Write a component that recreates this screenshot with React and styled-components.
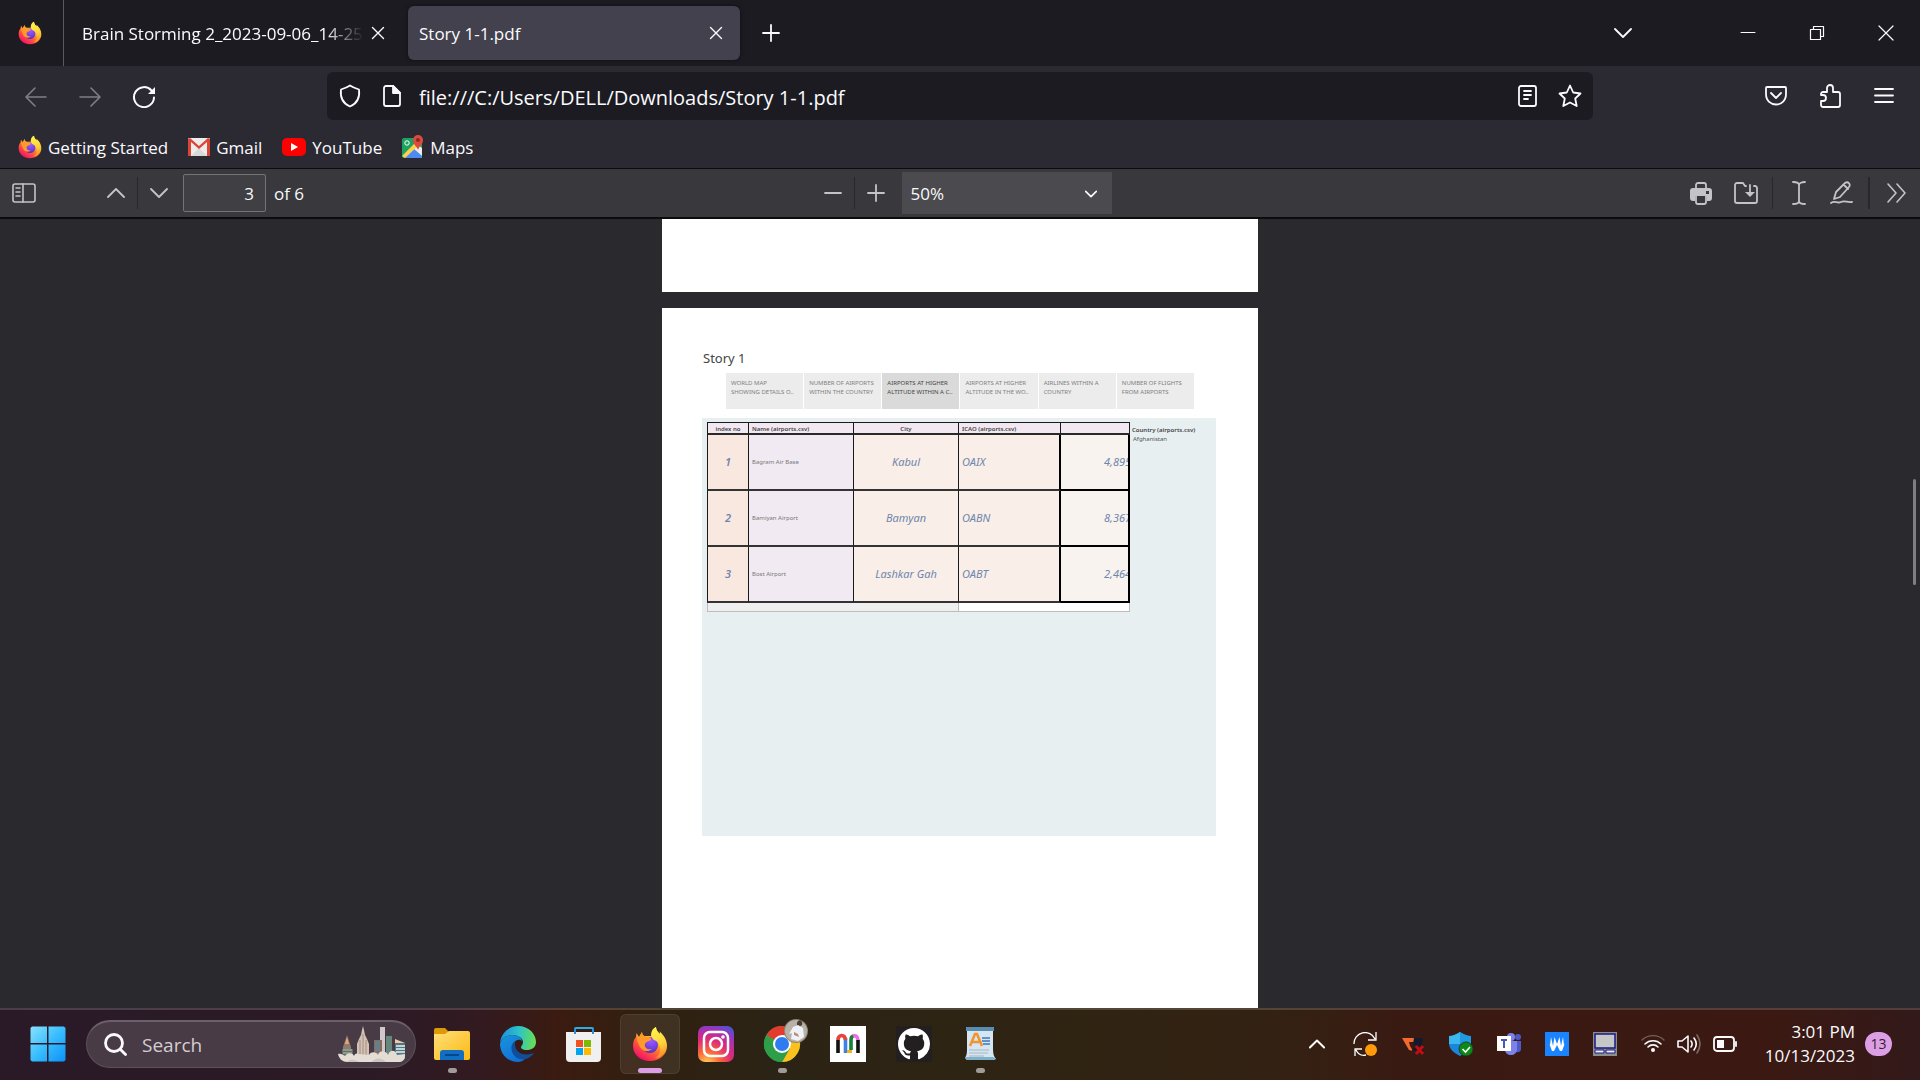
import React from "react";
import styled, { createGlobalStyle, css } from "styled-components";

const Global = createGlobalStyle`
  *, *::before, *::after { box-sizing: border-box; }
  body { margin: 0; background: #2a2a2e; font-family: "Open Sans", "Noto Sans", sans-serif; }
  button, input, select { font-family: inherit; color: inherit; border: 0; padding: 0; margin: 0; outline: 0; }
  button { background: none; }
  svg { display: block; flex: none; }
`;

/* ---------- shell ---------- */
const Screen = styled.div`
  height: 100vh;
  display: flex;
  flex-direction: column;
  overflow: hidden;
  color: #fbfbfe;
  font-size: 17px;
`;
const IconButton = styled.button`
  flex: none;
  display: flex;
  align-items: center;
  justify-content: center;
  width: ${(p) => p.$w || 36}px;
  height: 36px;
  opacity: ${(p) => (p.$dim ? 0.4 : 1)};
`;
const Spacer = styled.div`
  flex: 1;
`;

/* ---------- tab strip ---------- */
const TabStrip = styled.header`
  flex: none;
  display: flex;
  align-items: center;
  height: 66px;
  background: #1c1b22;
`;
const ViewButton = styled.button`
  flex: none;
  display: flex;
  align-items: center;
  padding-left: 18px;
  width: 64px;
  height: 66px;
  border-right: 1px solid #5a5960;
`;
const Tab = styled.div`
  flex: 0 0 332px;
  min-width: 0;
  display: flex;
  align-items: center;
  height: 54px;
  border-radius: 6px;
  ${(p) =>
    p.$active
      ? css`margin-left: 12px; padding: 0 6px 0 11px; background: #42414d; box-shadow: 0 0 4px rgba(0, 0, 0, 0.5);`
      : css`padding: 0 4px 0 18px;`}
`;
const TabTitle = styled.span`
  flex: 1;
  min-width: 0;
  white-space: nowrap;
  overflow: hidden;
  ${(p) => p.$fade && css`mask-image: linear-gradient(to left, transparent, #000 40px);`}
`;
const WindowButtons = styled.div`
  display: flex;
`;

/* ---------- navigation ---------- */
const NavBar = styled.nav`
  flex: none;
  display: flex;
  align-items: center;
  height: 60px;
  padding: 0 18px;
  background: #2b2a33;
`;
const NavGroup = styled.div`
  display: flex;
  gap: 18px;
`;
const UrlBar = styled.label`
  flex: 1;
  display: flex;
  align-items: center;
  gap: 6px;
  height: 48px;
  margin: 0 165px;
  padding: 0 5px;
  border-radius: 6px;
  background: #1c1b22;
`;
const UrlInput = styled.input`
  flex: 1;
  min-width: 0;
  padding: 2px 0 0 3px;
  background: none;
  font-size: 20px;
`;
const Bookmarks = styled.div`
  flex: none;
  display: flex;
  align-items: center;
  gap: 20px;
  height: 43px;
  padding-left: 18px;
  background: #2b2a33;
  border-bottom: 1px solid #0c0c0d;
`;
const Bookmark = styled.a`
  display: flex;
  align-items: center;
  gap: 6px;
  height: 42px;
  color: inherit;
  text-decoration: none;
`;

/* ---------- pdf toolbar ---------- */
const PdfBar = styled.div`
  flex: none;
  display: grid;
  grid-template-columns: 1fr auto 1fr;
  align-items: center;
  height: 50px;
  background: #38383d;
  border-bottom: 2px solid #0c0c0d;
  color: #c4c4c7;
`;
const PdfGroup = styled.div`
  display: flex;
  align-items: center;
  justify-content: ${(p) => (p.$end ? "flex-end" : "flex-start")};
  padding-left: ${(p) => (p.$end ? 0 : 6)}px;
`;
const PageNav = styled.div`
  display: flex;
  align-items: center;
  margin-left: 56px;
`;
const Divider = styled.span`
  flex: none;
  width: ${(p) => p.$w || 1}px;
  height: 32px;
  margin: 0 ${(p) => p.$gap || 3}px;
  background: #28282c;
`;
const PageField = styled.label`
  display: flex;
  align-items: center;
  gap: 8px;
  margin-left: 6px;
  color: #f9f9fa;
`;
const PageInput = styled.input`
  width: 83px;
  height: 38px;
  padding-right: 11px;
  text-align: right;
  font-size: 17px;
  background: #404044;
  border: 1px solid #737378;
  border-radius: 2px;
`;
const ZoomBox = styled.label`
  position: relative;
  margin-left: 8px;
  color: #f9f9fa;
  svg { position: absolute; right: 15px; top: 16px; pointer-events: none; }
`;
const ZoomSelect = styled.select`
  appearance: none;
  display: block;
  width: 210px;
  height: 42px;
  padding-left: 9px;
  font-size: 17px;
  background: #4a4a4f;
`;

/* ---------- document ---------- */
const Viewer = styled.main`
  flex: 1;
  min-height: 0;
  display: flex;
  background: #2a2a2e;
  overflow: hidden;
`;
const Pages = styled.div`
  flex: 1;
  display: flex;
  flex-direction: column;
  align-items: center;
  gap: 16px;
  padding-left: 7px;
`;
const Sheet = styled.section`
  width: 596px;
  background: #fff;
  color: #555;
  ${(p) => (p.$tail ? css`flex: 0 0 73px;` : css`flex: 1; padding: 40px 42px 0 40px;`)}
`;
const ScrollTrack = styled.div`
  flex: none;
  width: 7px;
  padding-top: 260px;
`;
const ScrollThumb = styled.div`
  width: 3px;
  height: 106px;
  border-radius: 2px;
  background: #7f7f81;
`;
const StoryTitle = styled.h1`
  margin: 0 0 5px;
  padding-left: 1px;
  font: 400 13px/20px "Noto Sans", sans-serif;
  color: #444;
`;
const StoryTabs = styled.div`
  display: grid;
  grid-template-columns: repeat(6, 1fr);
  gap: 1px;
  margin: 0 22px 9px 24px;
`;
const StoryTab = styled.button`
  height: 36px;
  padding: 6px 0 0 5px;
  display: flex;
  flex-direction: column;
  white-space: nowrap;
  text-align: left;
  font: 6px/9px "Noto Sans", sans-serif;
  color: ${(p) => (p.$on ? "#444" : "#808080")};
  background: ${(p) => (p.$on ? "#dadada" : "#ececec")};
`;
const Dashboard = styled.div`
  display: flex;
  align-items: flex-start;
  gap: 2px;
  height: 418px;
  padding: 4px 0 0 5px;
  background: #e7eff1;
`;
const Grid = styled.table`
  flex: none;
  width: 423px;
  table-layout: fixed;
  border-collapse: separate;
  border-spacing: 0;
  font-family: "Noto Sans", sans-serif;
  border-top: 1px solid #1a1a1a;
  th:first-child, tbody td:first-child { border-left: 1px solid #1a1a1a; }
  tfoot td:first-child { border-left: 1px solid #bdbdbd; }
`;
const Col = styled.col`
  width: ${(p) => p.$w}px;
`;
const Th = styled.th`
  height: 12px;
  padding: 1px 3px 0;
  font-size: 6px;
  line-height: 8px;
  font-weight: 600;
  text-align: ${(p) => p.$align || "left"};
  color: #444;
  background: #f1e8f1;
  border-right: 1px solid #1a1a1a;
  border-bottom: 2px solid #2a2a2a;
`;
const Td = styled.td`
  height: 56px;
  padding: 0 3px;
  overflow: hidden;
  white-space: nowrap;
  font-size: 11px;
  line-height: 14px;
  font-style: italic;
  color: #6f86ad;
  background: #f9eee8;
  border-right: 1px solid #1a1a1a;
  border-bottom: 2px solid #333;
  ${(p) => p.$kind === "index" && css`background: #f9e8df; text-align: center; font-weight: 600;`}
  ${(p) => p.$kind === "name" && css`background: #f1eaf2; font-style: normal; font-size: 6px; color: #777;`}
  ${(p) => p.$kind === "city" && css`text-align: center;`}
  ${(p) => p.$kind === "icao" && css`border-right: 2px solid #000;`}
  ${(p) => p.$kind === "alt" && css`
    padding: 0 0 0 43px; background: #f8f3ef; text-overflow: clip;
    border-right: 2px solid #000; border-bottom: 2px solid #000;`}
`;
const Foot = styled.td`
  height: 9px;
  padding: 0;
  background: ${(p) => (p.$plain ? "#fff" : "#efefef")};
  border-right: 1px solid #bdbdbd;
  border-bottom: 1px solid #bdbdbd;
`;
const Filter = styled.div`
  padding-top: 4px;
  font: 6px/9px "Noto Sans", sans-serif;
  color: #555;
  strong { display: block; font-weight: 600; color: #444; }
  span { padding-left: 1px; }
`;

/* ---------- taskbar ---------- */
const Taskbar = styled.footer`
  flex: none;
  display: flex;
  align-items: center;
  height: 72px;
  padding: 0 28px 2px 18px;
  border-top: 2px solid rgba(255, 255, 255, 0.16);
  background: linear-gradient(90deg, #2a1a27 0, #2b1a26 19%, #321a20 25%, #3b1b11 29%, #30200f 34%, #2b2315 40%, #2f2413 54%, #332213 66%, #391a12 73%, #3b1912 92%, #33191a 100%) border-box;
`;
const Apps = styled.div`
  display: flex;
  align-items: center;
  gap: 6px;
`;
const AppButton = styled.button`
  position: relative;
  display: flex;
  align-items: center;
  justify-content: center;
  width: 60px;
  height: 60px;
  border-radius: 6px;
  ${(p) =>
    p.$active && css`background: rgba(255, 255, 255, 0.08); box-shadow: inset 0 0 0 1px rgba(255, 255, 255, 0.07);`}
  &::after {
    content: "";
    position: absolute;
    bottom: 1px;
    height: 5px;
    border-radius: 3px;
    width: ${(p) => (p.$active ? 24 : p.$open ? 9 : 0)}px;
    background: ${(p) => (p.$active ? "#dc9fe5" : "#a09b98")};
  }
`;
const Search = styled.label`
  display: flex;
  align-items: center;
  gap: 15px;
  width: 330px;
  height: 48px;
  margin-left: 2px;
  padding: 0 7px 0 17px;
  border-radius: 24px;
  background: #493b45;
  border: 1px solid #5d5059;
  border-top: 2px solid #6b5f69;
`;
const SearchInput = styled.input`
  flex: 1;
  min-width: 0;
  background: none;
  font-size: 19px;
  &::placeholder { color: #d3ced1; opacity: 1; }
`;
const Tray = styled.div`
  display: flex;
  margin-right: 6px;
`;
const Clock = styled.button`
  width: 106px;
  text-align: right;
  white-space: nowrap;
  font-size: 17px;
  line-height: 24px;
`;
const Count = styled.button`
  width: 27px;
  height: 24px;
  margin-left: 10px;
  border-radius: 12px;
  background: #dc9fe5;
  color: #33202f;
  font-size: 14px;
  line-height: 24px;
`;

/* ---------- line icons ---------- */
const Line = ({ s = 24, h, w = 1.6, vb, children }) => (
  <svg width={s} height={h || s} viewBox={vb || `0 0 ${s} ${h || s}`} fill="none" stroke="currentColor" strokeWidth={w} strokeLinecap="round" strokeLinejoin="round">
    {children}
  </svg>
);
const Cross = () => <Line s={14} w={1.4}><path d="M1.5 1.5l11 11M12.5 1.5l-11 11" /></Line>;
const Chevron = ({ up, s = 18, w = 1.8 }) => (
  <Line s={s} vb="0 0 18 18" w={w}><path d={up ? "M1 13l8-8 8 8" : "M1 5l8 8 8-8"} /></Line>
);

/* ---------- colour icons ---------- */
const Firefox = ({ s = 24 }) => (
  <svg width={s} height={s} viewBox="0 0 36 36">
    <defs>
      <linearGradient id="ffBody" x1="0.85" y1="0.1" x2="0.25" y2="0.95">
        <stop offset="0" stopColor="#fff44f" /><stop offset=".35" stopColor="#ffb52b" />
        <stop offset=".6" stopColor="#ff6a2f" /><stop offset="1" stopColor="#f6106a" />
      </linearGradient>
      <radialGradient id="ffGlobe" cx=".55" cy=".2" r=".9">
        <stop offset="0" stopColor="#a05bff" /><stop offset=".6" stopColor="#6f3fe0" /><stop offset="1" stopColor="#4a2aa8" />
      </radialGradient>
      <linearGradient id="ffTail" x1=".4" y1="0" x2=".6" y2="1">
        <stop offset="0" stopColor="#fff44f" /><stop offset=".55" stopColor="#ffd43a" /><stop offset="1" stopColor="#ff8a2a" />
      </linearGradient>
    </defs>
    <path fill="url(#ffBody)" d="M5 7c0 2 1 3 2 4l3-5c0 2 1 4 3 4h6c0-5 2-8 5-9 0 3 2 5 4 7 0-1 0-2-1-3 5 4 8 9 8 15 0 9-8 15-17 15S1 29 1 20c0-4 1-7 3-9 0-2 0-3 1-4z" />
    <circle cx="18" cy="19" r="8" fill="url(#ffGlobe)" />
    <path fill="#ff9a2b" d="M5 8l2 3 3-5c0 3 2 4 4 5 3 0 5 0 5 2s-5 2-6 5c-1 4 3 6 7 5-4 4-11 2-13-4-2-4-3-7-2-11z" />
    <path fill="url(#ffTail)" d="M24 1c0 4 3 6 6 9 5 6 5 14 1 18-2 3-5 4-8 4 4-2 6-6 5-10 0-4-3-7-6-8-3-2-4-9 2-13z" />
  </svg>
);
const Gmail = () => (
  <svg width="22" height="18" viewBox="0 0 22 18">
    <rect width="22" height="18" rx="1" fill="#ececec" /><path d="M3 18L11 10l8 8z" fill="#d8d8d8" />
    <path d="M0 1v17h3V4l8 7 8-7v14h3V1l-2-1-9 8-9-8z" fill="#dc4437" />
  </svg>
);
const YouTube = () => (
  <svg width="24" height="18" viewBox="0 0 24 18"><rect width="24" height="18" rx="5" fill="#f00" /><path d="M9 5l7 4-7 4z" fill="#fff" /></svg>
);
const Maps = () => (
  <svg width="22" height="24" viewBox="0 0 22 24">
    <rect y="3" width="20" height="20" rx="2" fill="#1da261" />
    <path d="M2 23L11 13l9 8v2z" fill="#4c8bf5" /><path d="M11 13l4-4 5 4v8z" fill="#eee" /><path d="M0 21L14 7l2 4L3 23z" fill="#ffd04c" />
    <circle cx="5" cy="8" r="2.2" fill="none" stroke="#fff" />
    <path d="M16 15c-1-4-5-5-5-10a5 5 0 0110 0c0 5-4 6-5 10z" fill="#dd4b3e" /><circle cx="16" cy="5" r="2" fill="#8c2a22" />
  </svg>
);
const Windows = () => (
  <svg width="36" height="36" viewBox="0 0 36 36">
    <defs><linearGradient id="win" x1="0" y1="0" x2="36" y2="36" gradientUnits="userSpaceOnUse"><stop offset="0" stopColor="#8be3ff" /><stop offset=".5" stopColor="#38bdff" /><stop offset="1" stopColor="#0a90f8" /></linearGradient></defs>
    <path fill="url(#win)" d="M2 .5h15v16.500H.5V2zM18.500.5H34L35.500 2v15h-17zM.5 18.500h16.500v17H2L.5 34zM18.500 18.500h17V34L34 35.500H18.500z" />
  </svg>
);
const City = () => (
  <svg width="70" height="38" viewBox="0 0 70 38">
    <path d="M5 33V21l1-3 2-6 1-3 1 3 2 6 1 3v12z" fill="#8f7a6e" /><path d="M7 18l2-7 2 7z" fill="#e9a777" />
    <path d="M4 23h11v8H4z" fill="#58706f" /><path d="M5 24h9M5 27h9" stroke="#cdbf9f" />
    <path d="M19 36V18l2-5 2-4 1-5 1-4 1 4 1 5 2 4 2 5v18z" fill="#d6c2b5" /><path d="M22 14v22M25 8v28M28 14v22" stroke="#97817a" strokeWidth=".8" />
    <path d="M42 1h5v30h-5z" fill="#cfc7c9" /><path d="M48 10h6v20h-6z" fill="#67877d" /><path d="M36 14h8v16h-8z" fill="#8a6c5c" /><path d="M37 15h5v10h-5z" fill="#657f8c" />
    <path d="M57 17V14l10 3v16H57z" fill="#4a7885" /><path d="M57 13l10 4H57z" fill="#f0c8a4" /><path d="M58 20h9M58 23h9M58 26h9" stroke="#eef1f0" strokeWidth="1.500" />
    <path d="M0 28c3-1 5 1 7 2 3-4 8-3 9 0 1-3 3-3 5-2l10 1c2-4 8-3 9 0 1-5 8-5 10 0 2-6 8-5 9 0l8-1v2c0 4-3 6-6 6H9c-4 0-8-3-9-8z" fill="#e4ddd5" />
    <path d="M9 36c4-4 9-2 12 0zM34 36c4-5 10-4 14 0z" fill="#cdc4bb" />
  </svg>
);
const Folder = () => (
  <svg width="36" height="36" viewBox="0 0 36 36">
    <defs><linearGradient id="fold" x1="0" y1="0" x2="1" y2="1"><stop offset="0" stopColor="#ffe07a" /><stop offset="1" stopColor="#fcb912" /></linearGradient></defs>
    <path d="M0 4a2 2 0 012-2h9l4 4v6H0z" fill="#dd9a08" /><path d="M0 8h11l4-3h19a2 2 0 012 2v25a2 2 0 01-2 2H2a2 2 0 01-2-2z" fill="url(#fold)" />
    <path d="M6 34v-7a3 3 0 013-3h18a3 3 0 013 3v7z" fill="#0f6fc2" /><path d="M11 29h14" stroke="#08448a" strokeWidth="2" />
  </svg>
);
const Edge = () => (
  <svg width="36" height="36" viewBox="0 0 36 36">
    <defs>
      <linearGradient id="edgeTop" x1="0" y1=".5" x2="1" y2=".6"><stop offset="0" stopColor="#1c8fe0" /><stop offset=".5" stopColor="#2cc3c8" /><stop offset="1" stopColor="#6be04d" /></linearGradient>
      <linearGradient id="edgeMid" x1="0" y1="0" x2=".6" y2="1"><stop offset="0" stopColor="#1a94dd" /><stop offset="1" stopColor="#0f71d6" /></linearGradient>
    </defs>
    <path d="M0 17C1 7 9 0 18 0c11 0 18 8 18 16 0 6-5 8-9 8-5 0-6-2-6-3s2-2 2-5c0-4-5-7-11-7C6 9 1 13 0 17z" fill="url(#edgeTop)" />
    <path d="M0 18C1 12 7 9 12 9c6 0 10 3 10 6-2-2-7-2-8 3-1 7 4 14 12 14-3 3-6 4-8 4C8 36 0 28 0 18z" fill="url(#edgeMid)" />
    <path d="M15 15c-6 4-4 13 2 17 6 3 13 1 17-5-7 3-19 2-19-9z" fill="#114e9a" />
  </svg>
);
const Store = () => (
  <svg width="36" height="36" viewBox="0 0 36 36">
    <path d="M9 8V3a1 1 0 011-1h16a1 1 0 011 1v5" fill="none" stroke="#2cabe8" strokeWidth="2" /><path d="M0 6h35v26a4 4 0 01-4 4H4a4 4 0 01-4-4z" fill="#f0f0f0" />
    <path d="M9 3v5M27 3v5" stroke="#2c8fd0" strokeWidth="2" />
    <path d="M10 14h7v7h-7z" fill="#f25022" /><path d="M18 14h7v7h-7z" fill="#7fba00" /><path d="M10 22h7v7h-7z" fill="#00a4ef" /><path d="M18 22h7v7h-7z" fill="#ffb900" />
  </svg>
);
const Instagram = () => (
  <svg width="36" height="36" viewBox="0 0 36 36">
    <defs><radialGradient id="insta" cx=".25" cy="1.050" r="1.150"><stop offset="0" stopColor="#ffd65a" /><stop offset=".3" stopColor="#fb6a3a" /><stop offset=".6" stopColor="#dc2a78" /><stop offset=".85" stopColor="#a033b8" /><stop offset="1" stopColor="#5b4fd0" /></radialGradient></defs>
    <rect width="36" height="36" rx="7" fill="url(#insta)" />
    <g fill="none" stroke="#fff" strokeWidth="2.500"><rect x="6" y="6" width="24" height="24" rx="6" /><circle cx="18" cy="18" r="6" /></g><circle cx="25" cy="11" r="1.800" fill="#fff" />
  </svg>
);
const Chrome = () => (
  <svg width="36" height="36" viewBox="0 0 36 36" overflow="visible">
    <circle cx="18" cy="18" r="18" fill="#34a046" />
    <path d="M18 18L2.400 9A18 18 0 0133.600 9z" fill="#e33b2e" /><path d="M18 9h15.600A18 18 0 0118 36l7.800-13.500z" fill="#fcc21b" />
    <path d="M2.400 9A18 18 0 0018 36l7.800-13.500H10.200z" fill="#2e9e48" /><circle cx="18" cy="18" r="9" fill="#fff" /><circle cx="18" cy="18" r="7" fill="#2f7cf0" />
    <g transform="translate(-2 -7)">
      <circle cx="34" cy="12" r="12" fill="#8d857c" /><circle cx="34" cy="12" r="11" fill="#b8b1a8" />
      <path d="M36 2c3-2 5 1 4 4l-3 2c-2-1-3-3-1-6z" fill="#4c3b35" /><path d="M31 8l5-2 5 3 1 9-6 4-7-2 1-6-3 1z" fill="#eef1f7" /><path d="M32 13l4 2 1 3-5-2z" fill="#b98f78" />
    </g>
  </svg>
);
const Miro = () => (
  <svg width="36" height="36" viewBox="0 0 36 36">
    <path fill="#fff" d="M0 0h36v36H0z" />
    <g fill="none" strokeWidth="3.600">
      <path d="M8 27V14" stroke="#111" /><path d="M15.500 27V12" stroke="#3f7fe8" /><path d="M8 14c0-6 7-6 7.500 0" stroke="#e8443a" />
      <path d="M17 25.500h5" stroke="#f3b51b" strokeWidth="3" /><path d="M21 24V14c0-3 1-4 3-4" stroke="#16803c" /><path d="M23 10c3-1 5 1 5 4.500" stroke="#ee6be0" /><path d="M28 27V14" stroke="#111" />
    </g>
  </svg>
);
const GitHub = () => (
  <svg width="36" height="36" viewBox="0 0 36 36">
    <path fill="#231f20" d="M0 0h36v36H0z" />
    <path transform="translate(2 2) scale(2)" fill="#fff" d="M8 0C3.580 0 0 3.580 0 8c0 3.540 2.290 6.530 5.470 7.590.4.070.55-.17.55-.38 0-.19-.01-.82-.01-1.490-2.010.37-2.530-.49-2.690-.94-.09-.23-.48-.94-.82-1.130-.28-.15-.68-.52-.01-.53.63-.01 1.080.58 1.230.82.72 1.210 1.870.87 2.330.66.07-.52.28-.87.51-1.070-1.780-.2-3.640-.89-3.640-3.950 0-.87.31-1.590.82-2.150-.08-.2-.36-1.020.08-2.120 0 0 .67-.21 2.200.82.64-.18 1.320-.27 2-.27s1.360.09 2 .27c1.530-1.040 2.200-.82 2.200-.82.44 1.100.16 1.920.08 2.120.51.56.82 1.270.82 2.150 0 3.070-1.870 3.750-3.650 3.950.29.25.54.73.54 1.480 0 1.070-.01 1.930-.01 2.200 0 .21.15.46.55.38A8.010 8.010 0 0016 8c0-4.420-3.580-8-8-8z" />
  </svg>
);
const WordPad = () => (
  <svg width="32" height="36" viewBox="0 0 32 36">
    <path d="M3 1h26v22c0 5 1 8 3 10l-3 1H3L1 32c2-3 2-6 2-10z" fill="#d5e6f2" /><path d="M2 1h28v4H2z" fill="#5b8db2" /><path d="M1 31h28l3 2-3 1H3z" fill="#7fb1cd" />
    <path d="M6 20l5-12h2l5 12M8 16h8" fill="none" stroke="#f2932b" strokeWidth="2.500" /><path d="M18 12h8M18 15h8M19 18h7" stroke="#3e78b8" strokeWidth="1.500" />
    <path d="M5 24h20M5 27h19M5 30h15" stroke="#a9b4bd" />
  </svg>
);
const Sync = () => (
  <svg width="24" height="24" viewBox="0 0 24 24">
    <g fill="none" stroke="#fff" strokeWidth="1.300"><path d="M1 12A11 11 0 0122 7M23 0v8h-8M2 24v-7h7M3 18c2 4 6 6 10 5" /></g><circle cx="18" cy="18" r="6" fill="#ff9a0a" />
  </svg>
);
const Blocked = () => (
  <svg width="24" height="24" viewBox="0 0 24 24">
    <path d="M1 6h12v4H8l1 4 3 5-4-1z" fill="#f26a2e" /><path d="M13 6h9l-1 5 1 8H11l1-3h4v-2l-4-2z" fill="#121a30" /><path d="M15 14l7 8M22 14l-7 8" stroke="#c40d12" strokeWidth="3" />
  </svg>
);
const Defender = () => (
  <svg width="26" height="24" viewBox="0 0 26 24">
    <path d="M12 0c3 2 7 4 11 4v7c0 6-5 10-11 13C6 21 1 17 1 11V4c4 0 8-2 11-4z" fill="#1a86d8" /><path d="M12 0v12H1V4c4 0 8-2 11-4z" fill="#3cb6ef" /><path d="M12 0c3 2 7 4 11 4v8H12z" fill="#1f9ae0" />
    <circle cx="18" cy="17" r="7" fill="#0c8a17" stroke="#26301a" strokeWidth=".8" /><path d="M14.500 17l3 3 4.500-5" fill="none" stroke="#fff" strokeWidth="1.600" />
  </svg>
);
const Teams = () => (
  <svg width="26" height="24" viewBox="0 0 26 24">
    <circle cx="15" cy="5" r="4" fill="#7b83eb" /><circle cx="22" cy="5" r="3" fill="#5059c9" /><path d="M19 9h6v8c0 2-2 4-5 3z" fill="#5059c9" /><path d="M10 9h11v8c0 4-3 6-6 6s-6-2-6-5z" fill="#7b83eb" />
    <path d="M1 4h14v15H1z" fill="#fff" /><path d="M5 8h6M8 8v8" stroke="#4b53bc" strokeWidth="2" />
  </svg>
);
const Wave = () => (
  <svg width="24" height="24" viewBox="0 0 24 24"><path fill="#1a84ff" d="M0 0h24v24H0z" /><path d="M4 11l1 2 1-8 2 9 1.500-9L12 12l2.500-7L16 14l2-9 1 8 1-2-3 8h-2l-3-6-3 6H7z" fill="#fff" /></svg>
);
const Display = () => (
  <svg width="24" height="24" viewBox="0 0 24 24">
    <path fill="#8d8d8d" d="M0 0h24v24H0z" /><path d="M2 2h20v14H2z" fill="#c6c6c6" stroke="#1a1a86" strokeWidth="1.500" /><path d="M2 18h9v3H2zM13 18h9v3h-9z" fill="#eee" stroke="#1a1a86" />
  </svg>
);
const Wifi = () => (
  <Line><path d="M1 8a16 16 0 0122 0" strokeWidth="1.400" opacity=".3" /><path d="M4 12a11.500 11.500 0 0116 0M7 15a7 7 0 0110 0" /><circle cx="12" cy="18" r="2" fill="currentColor" stroke="none" /></Line>
);
const Volume = () => (
  <Line><path d="M1 9h4l6-5v16l-6-5H1zM14 9c1.500 2 1.500 4 0 6M17 6c3 4 3 8 0 12" /><path d="M20 3c4 6 4 12 0 18" opacity=".35" /></Line>
);
const Battery = () => (
  <Line w={1.800}><rect x="1" y="5" width="20" height="14" rx="3" /><path d="M4 8h7v8H4z" fill="currentColor" stroke="none" /><path d="M23 10v4" /></Line>
);

/* ---------- data ---------- */
const story = [
  ["WORLD MAP", "SHOWING DETAILS O.."],
  ["NUMBER OF AIRPORTS", "WITHIN THE COUNTRY"],
  ["AIRPORTS AT HIGHER", "ALTITUDE WITHIN A C.."],
  ["AIRPORTS AT HIGHER", "ALTITUDE IN THE WO.."],
  ["AIRLINES WITHIN A", "COUNTRY"],
  ["NUMBER OF FLIGHTS", "FROM AIRPORTS"],
];
const airports = [
  ["1", "Bagram Air Base", "Kabul", "OAIX", "4,895"],
  ["2", "Bamiyan Airport", "Bamyan", "OABN", "8,367"],
  ["3", "Bost Airport", "Lashkar Gah", "OABT", "2,464"],
];
const kinds = ["index", "name", "city", "icao", "alt"];
const links = [
  ["Getting Started", Firefox],
  ["Gmail", Gmail],
  ["YouTube", YouTube],
  ["Maps", Maps],
];
const apps = [
  { name: "File Explorer", Icon: Folder, open: true },
  { name: "Edge", Icon: Edge },
  { name: "Store", Icon: Store },
  { name: "Firefox", Icon: () => <Firefox s={36} />, active: true },
  { name: "Instagram", Icon: Instagram },
  { name: "Chrome", Icon: Chrome, open: true },
  { name: "Miro", Icon: Miro },
  { name: "GitHub", Icon: GitHub },
  { name: "WordPad", Icon: WordPad, open: true },
];
const tray = [
  ["Hidden icons", () => <Chevron up s={16} w={2.200} />],
  ["Update", Sync], ["Blocked", Blocked], ["Security", Defender], ["Teams", Teams], ["Wave", Wave], ["Display", Display],
];

export default function App() {
  return (
    <Screen>
      <Global />
      <TabStrip>
        <ViewButton aria-label="Firefox View"><Firefox /></ViewButton>
        <Tab>
          <TabTitle $fade>Brain Storming 2_2023-09-06_14-25-08.pdf</TabTitle>
          <IconButton $w={28} aria-label="Close tab"><Cross /></IconButton>
        </Tab>
        <Tab $active>
          <TabTitle>Story 1-1.pdf</TabTitle>
          <IconButton aria-label="Close tab"><Cross /></IconButton>
        </Tab>
        <IconButton $w={62} aria-label="New tab"><Line s={18} w={1.8}><path d="M9 1v16M1 9h16" /></Line></IconButton>
        <Spacer />
        <IconButton $w={180} aria-label="List tabs"><Chevron /></IconButton>
        <WindowButtons>
          <IconButton $w={69} aria-label="Minimize"><Line s={16} w={1}><path d="M1 7.500h14" /></Line></IconButton>
          <IconButton $w={69} aria-label="Restore"><Line s={16} w={1.200}><path d="M1.500 4.500h10v10h-10zM4.500 4V1.500h10v10H12" /></Line></IconButton>
          <IconButton $w={69} aria-label="Close"><Line s={16} w={1.200}><path d="M1 1l14 14M15 1L1 15" /></Line></IconButton>
        </WindowButtons>
      </TabStrip>

      <NavBar>
        <NavGroup>
          <IconButton $dim aria-label="Back"><Line><path d="M22 13H2M11 4l-9 9 9 9" /></Line></IconButton>
          <IconButton $dim aria-label="Forward"><Line><path d="M2 13h20M13 4l9 9-9 9" /></Line></IconButton>
          <IconButton aria-label="Reload"><Line w={2}><path d="M19.500 6.500a10 10 0 102.500 7" /><path d="M23 3v7h-7z" fill="currentColor" stroke="none" /></Line></IconButton>
        </NavGroup>
        <UrlBar>
          <IconButton as="span"><Line w={1.800}><path d="M12 1.500c3 2 6 3 9 4 1 8-2 14-9 17C5 19.500 2 13.500 3 5.500c3-1 6-2 9-4z" /></Line></IconButton>
          <IconButton as="span"><Line w={1.800}><path d="M13 2H6a2 2 0 00-2 2v16a2 2 0 002 2h12a2 2 0 002-2V9z" /><path d="M13 2v7h7z" fill="currentColor" /></Line></IconButton>
          <UrlInput aria-label="Address" defaultValue="file:///C:/Users/DELL/Downloads/Story 1-1.pdf" />
          <IconButton aria-label="Reader view"><Line w={1.800}><rect x="3" y="2" width="17" height="20" rx="2" /><path d="M8 7h7M8 11h7M8 15h4" /></Line></IconButton>
          <IconButton aria-label="Bookmark"><Line w={1.800}><path d="M12 1.500l3.200 7 7.300 1-5.300 5 1.500 7.500L12 18.500 5.300 22l1.500-7.500-5.300-5 7.300-1z" /></Line></IconButton>
        </UrlBar>
        <NavGroup>
          <IconButton aria-label="Pocket"><Line w={1.800}><path d="M3 3h18a1 1 0 011 1v6c0 14-20 14-20 0V4a1 1 0 011-1zM7 9l5 5 5-5" /></Line></IconButton>
          <IconButton aria-label="Extensions"><Line w={1.800}><path d="M3 10a2 2 0 012-2h4V4a3 3 0 016 0v4h5a2 2 0 012 2v11a2 2 0 01-2 2H5a2 2 0 01-2-2v-4h2a3 3 0 000-6H3z" /></Line></IconButton>
          <IconButton aria-label="Menu"><Line s={20} w={1.800}><path d="M1 3h18M1 9.500h18M1 16h18" /></Line></IconButton>
        </NavGroup>
      </NavBar>

      <Bookmarks>
        {links.map(([label, Icon]) => (
          <Bookmark key={label} href="#"><Icon />{label}</Bookmark>
        ))}
      </Bookmarks>

      <PdfBar>
        <PdfGroup>
          <IconButton aria-label="Toggle sidebar"><Line s={24} h={20}><rect x="1" y="1" width="22" height="18" rx="2" /><path d="M11 1v18M4 5h4M4 9h4M4 13h4" /></Line></IconButton>
          <PageNav>
            <IconButton aria-label="Previous page"><Chevron up /></IconButton>
            <Divider />
            <IconButton aria-label="Next page"><Chevron /></IconButton>
            <PageField>
              <PageInput aria-label="Page" defaultValue="3" />
              <span>of 6</span>
            </PageField>
          </PageNav>
        </PdfGroup>
        <PdfGroup>
          <IconButton aria-label="Zoom out"><Line s={18} w={1.8}><path d="M1 9h16" /></Line></IconButton>
          <Divider />
          <IconButton aria-label="Zoom in"><Line s={18} w={1.8}><path d="M1 9h16M9 1v16" /></Line></IconButton>
          <ZoomBox>
            <ZoomSelect aria-label="Zoom" defaultValue="50%"><option>50%</option></ZoomSelect>
            <Chevron s={12} w={2.500} />
          </ZoomBox>
        </PdfGroup>
        <PdfGroup $end>
          <IconButton $w={48} aria-label="Print"><Line w={1.800}><path d="M7 8V4a2 2 0 012-2h6a2 2 0 012 2v4" /><path fillRule="evenodd" fill="currentColor" stroke="none" d="M4 7h16a3 3 0 013 3v7a3 3 0 01-3 3h-2v-5H6v5H4a3 3 0 01-3-3v-7a3 3 0 013-3zm13 3v3h3v-3z" /><path d="M7 15v6a2 2 0 002 2h6a2 2 0 002-2v-6" /></Line></IconButton>
          <IconButton $w={42} aria-label="Save"><Line w={1.800}><path d="M12 5h-1L9 2H3a2 2 0 00-2 2v16a2 2 0 002 2h18a2 2 0 002-2V7a2 2 0 00-2-2h-1M16 4v9" /><path d="M11 11h10l-5 5z" fill="currentColor" stroke="none" /></Line></IconButton>
          <Divider $gap={5} />
          <IconButton $w={42} aria-label="Text"><Line w={1.800}><path d="M6 1c3 0 6 1 6 3 0-2 3-3 6-3M12 4v16M6 23c3 0 6-1 6-3 0 2 3 3 6 3" /></Line></IconButton>
          <IconButton $w={44} aria-label="Draw"><Line w={1.800}><path d="M4 18l2-7L15 2c3-2 6 1 4 4L10 16zM14 4l4 4M1 22c4-3 6 1 10-1s6 1 11 0" /></Line></IconButton>
          <Divider $w={2} $gap={4} />
          <IconButton $w={46} aria-label="Tools"><Line s={20}><path d="M1 1l8 9-8 9M10 1l8 9-8 9" /></Line></IconButton>
        </PdfGroup>
      </PdfBar>

      <Viewer>
        <Pages>
          <Sheet $tail />
          <Sheet>
            <StoryTitle>Story 1</StoryTitle>
            <StoryTabs>
              {story.map(([a, b], i) => (
                <StoryTab key={i} $on={i === 2}><span>{a}</span><span>{b}</span></StoryTab>
              ))}
            </StoryTabs>
            <Dashboard>
              <Grid>
                <colgroup><Col $w={42} /><Col $w={105} /><Col $w={105} /><Col $w={102} /><Col $w={69} /></colgroup>
                <thead>
                  <tr>
                    <Th $align="center">index no</Th><Th>Name (airports.csv)</Th><Th $align="center">City</Th><Th>ICAO (airports.csv)</Th><Th />
                  </tr>
                </thead>
                <tbody>
                  {airports.map((row) => (
                    <tr key={row[0]}>{row.map((v, i) => <Td key={i} $kind={kinds[i]}>{v}</Td>)}</tr>
                  ))}
                </tbody>
                <tfoot><tr><Foot colSpan={3} /><Foot $plain colSpan={2} /></tr></tfoot>
              </Grid>
              <Filter><strong>Country (airports.csv)</strong><span>Afghanistan</span></Filter>
            </Dashboard>
          </Sheet>
        </Pages>
        <ScrollTrack><ScrollThumb /></ScrollTrack>
      </Viewer>

      <Taskbar>
        <Apps>
          <AppButton aria-label="Start"><Windows /></AppButton>
          <Search>
            <Line s={23} w={2.800}><circle cx="10" cy="10" r="8.500" /><path d="M16.500 16.500l5 5" /></Line>
            <SearchInput aria-label="Search" placeholder="Search" />
            <City />
          </Search>
          {apps.map(({ name, Icon, open, active }) => (
            <AppButton key={name} aria-label={name} $open={open} $active={active}><Icon /></AppButton>
          ))}
        </Apps>
        <Spacer />
        <Tray>
          {tray.map(([name, Icon]) => <IconButton key={name} $w={48} aria-label={name}><Icon /></IconButton>)}
        </Tray>
        <Tray>
          <IconButton aria-label="Wi-Fi"><Wifi /></IconButton>
          <IconButton aria-label="Volume"><Volume /></IconButton>
          <IconButton aria-label="Battery"><Battery /></IconButton>
        </Tray>
        <Clock>3:01 PM<br />10/13/2023</Clock>
        <Count>13</Count>
      </Taskbar>
    </Screen>
  );
}
